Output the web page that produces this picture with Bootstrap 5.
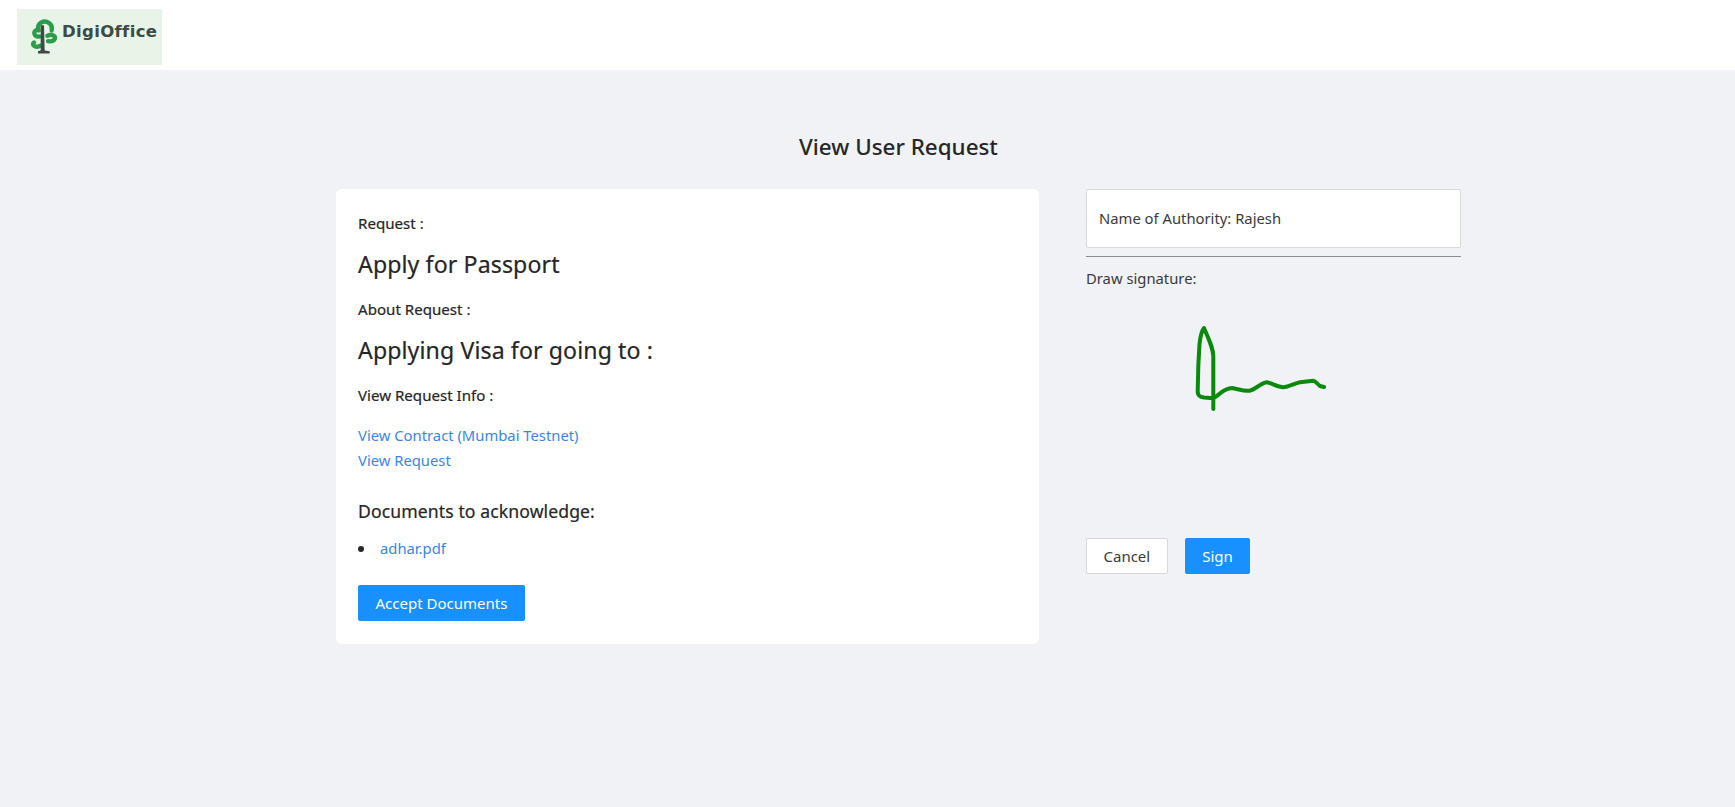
<!DOCTYPE html>
<html>
<head>
    <meta charset="UTF-8">
    <title>View User Request</title>
    <link href="https://cdn.jsdelivr.net/npm/bootstrap@5.3.2/dist/css/bootstrap.min.css" rel="stylesheet">
    <style>
        body {
            background-color: #f0f2f5;
            font-family: "Noto Sans", "Open Sans", sans-serif;
            font-size: 14.8px;
            line-height: 25px;
            color: #262626;
        }
        .top-header {
            height: 70px;
            background-color: #fff;
            padding: 9px 17px;
        }
        .logo-box {
            width: 145px;
            height: 56px;
            background-color: #e7f4e7;
            padding-left: 12px;
            gap: 3px;
        }
        .logo-text {
            font-family: "DejaVu Sans", sans-serif;
            font-weight: 700;
            font-size: 16.5px;
            letter-spacing: 0.35px;
            color: #3d4a45;
            margin-top: -12px;
        }
        .main-wrap {
            width: 1125px;
            margin-left: 336px;
        }
        .page-title {
            font-size: 22.4px;
            line-height: 30px;
            font-weight: 500;
            text-align: center;
            margin: 62px 0 27px;
            color: #262626;
        }
        .request-card {
            width: 703px;
            height: 455px;
            padding: 22px;
            border-radius: 6px;
            background-color: #fff;
        }
        .side-panel {
            width: 375px;
            color: #3a3a3a;
        }
        .content-wrap {
            gap: 47px;
        }
        .field-label {
            font-size: 15.1px;
            font-weight: 400;
            margin: 0 0 12px;
            line-height: 24px;
            -webkit-text-stroke: 0.2px #262626;
        }
        .field-value {
            font-size: 23.1px;
            line-height: 34px;
            font-weight: 400;
            letter-spacing: 0.12px;
            margin: 0 0 16px;
            -webkit-text-stroke: 0.2px #262626;
        }
        .link-blue {
            color: #3a86e4;
            text-decoration: none;
            display: block;
        }
        .docs-title {
            font-size: 17.6px;
            font-weight: 400;
            letter-spacing: 0.1px;
            line-height: 26px;
            margin: 25px 0 12px;
            -webkit-text-stroke: 0.2px #262626;
        }
        .docs-list {
            list-style: none;
            padding-left: 0;
            margin: 0 0 24px;
            gap: 16px;
        }
        .docs-dot {
            width: 6px;
            height: 6px;
            border-radius: 50%;
            background-color: #262626;
        }
        .btn-azul {
            background-color: #1890ff;
            border: 1px solid #1890ff;
            color: #fff;
            border-radius: 2px;
            font-size: 15px;
            height: 36px;
            padding: 0 16.5px;
            line-height: 32px;
        }
        .btn-branco {
            background-color: #fff;
            border: 1px solid #d9d9d9;
            color: #3a3a3a;
            border-radius: 2px;
            font-size: 15px;
            height: 36px;
            padding: 0 16.5px;
            line-height: 32px;
        }
        .btn-gap {
            gap: 17px;
        }
        .name-box {
            height: 59px;
            background-color: #fff;
            border: 1px solid #d9d9d9;
            border-radius: 2px;
            padding: 0 12px;
        }
        .side-rule {
            margin: 8px 0 0;
            border-top: 1px solid #8a8a94;
            opacity: 1;
        }
        .draw-label {
            margin: 9px 0 3px;
        }
        .sign-area {
            display: block;
            height: 244px;
        }
    </style>
</head>
<body>

<header class="top-header">
    <div class="logo-box d-flex align-items-center">
        <svg width="30" height="40" viewBox="85 50 90 115">
            <g fill="none" stroke="#2a9d4a" stroke-width="13" stroke-linecap="round">
                <path d="M114 88 C106 66 130 54 146 66 C153 72 155 80 153 88"/>
                <path d="M116 106 C100 108 96 92 108 86"/>
                <path d="M118 134 C102 142 92 130 100 124"/>
                <path d="M142 120 C160 124 168 110 160 104 C154 100 146 100 140 104"/>
            </g>
            <path d="M120 72 L130 72 L132 148 L147 150 L147 157 L112 157 L112 150 L120 148 Z" fill="#3d4a45"/>
        </svg>
        <span class="logo-text">DigiOffice</span>
    </div>
</header>

<div class="main-wrap">
    <h1 class="page-title">View User Request</h1>

    <div class="content-wrap d-flex align-items-start">
        <div class="request-card">
            <p class="field-label">Request :</p>
            <p class="field-value">Apply for Passport</p>
            <p class="field-label">About Request :</p>
            <p class="field-value">Applying Visa for going to :</p>
            <p class="field-label mb-3">View Request Info :</p>
            <a class="link-blue" href="#">View Contract (Mumbai Testnet)</a>
            <a class="link-blue" href="#">View Request</a>
            <p class="docs-title">Documents to acknowledge:</p>
            <ul class="docs-list d-flex align-items-center">
                <li class="docs-dot"></li>
                <li><a class="link-blue" href="#">adhar.pdf</a></li>
            </ul>
            <button class="btn btn-azul" type="button">Accept Documents</button>
        </div>

        <div class="side-panel">
            <div class="name-box d-flex align-items-center">Name of Authority: Rajesh</div>
            <hr class="side-rule">
            <p class="draw-label">Draw signature:</p>
            <svg class="sign-area" width="375" height="244" viewBox="0 0 375 244">
                <path d="M127.3 115 L127.3 62 C127 54 124 48 118 34 C115 38 114 45 113.5 50 L112.3 72 L111.7 98 C112 102 114 103 118 103.5 L127.3 104.3 C132 102 134 99 137.3 97 C141 95 143 94 146 94 C152 95 158 97.5 164 96.7 C170 95 175 89 180.7 88.3 C186 89 191 93 197.3 93.3 C203 93 208 89.5 214 88.3 L227.3 86.7 C230 87 231 90 234 92 L238 93" fill="none" stroke="#0a8a0a" stroke-width="4" stroke-linecap="round" stroke-linejoin="round"/>
            </svg>
            <div class="d-flex btn-gap">
                <button class="btn btn-branco" type="button">Cancel</button>
                <button class="btn btn-azul" type="button">Sign</button>
            </div>
        </div>
    </div>
</div>

<script src="https://cdn.jsdelivr.net/npm/bootstrap@5.3.2/dist/js/bootstrap.bundle.min.js"></script>
</body>
</html>
